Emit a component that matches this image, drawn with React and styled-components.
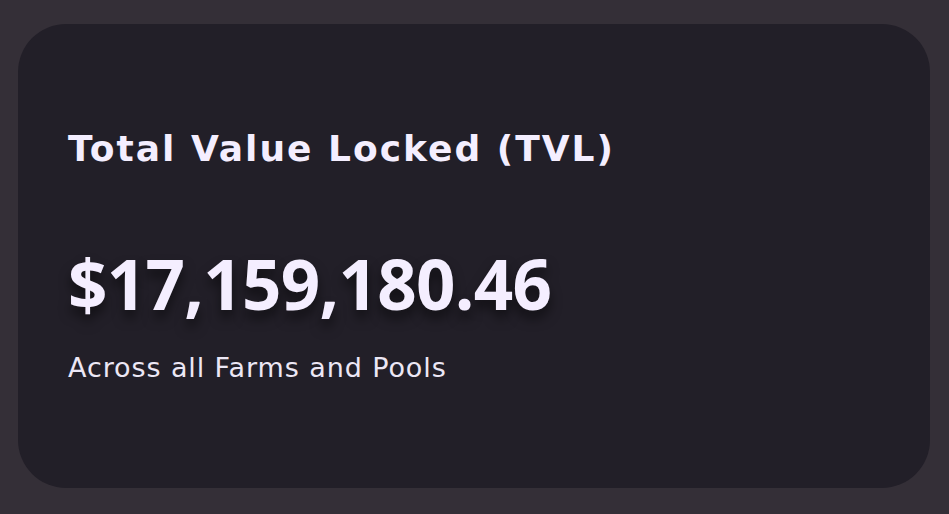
import React from "react";
import styled, { createGlobalStyle } from "styled-components";

const Global = createGlobalStyle`
  html, body { margin: 0; padding: 0; background: #342f37; }
  body { font-family: "Open Sans", "Noto Sans", sans-serif; }
`;

const Page = styled.div`
  box-sizing: border-box;
  width: 949px;
  height: 514px;
  padding: 24px 19px 26px 18px;
  display: flex;
`;

const Card = styled.section`
  flex: 1;
  background: #221f28;
  border-radius: 48px;
  padding: 0 50px;
  display: flex;
  flex-direction: column;
  justify-content: center;
  color: #f4eeff;
`;

const Title = styled.h2`
  margin: 0;
  font-family: "DejaVu Sans", sans-serif;
  font-size: 36px;
  font-weight: 700;
  line-height: 1.2;
  letter-spacing: 2px;
`;

const Value = styled.div`
  margin-top: 76px;
  font-size: 69px;
  font-weight: 700;
  line-height: 1.1;
  letter-spacing: -0.7px;
  text-shadow: 0 8px 12px rgba(0, 0, 0, 0.5);
`;

const Caption = styled.p`
  margin: 30px 0 0;
  font-family: "DejaVu Sans", sans-serif;
  font-size: 27px;
  font-weight: 400;
  line-height: 1.2;
  letter-spacing: 0.9px;
  color: #ece7f5;
`;

export default function App() {
  return (
    <>
      <Global />
      <Page>
        <Card>
          <Title>Total Value Locked (TVL)</Title>
          <Value>$17,159,180.46</Value>
          <Caption>Across all Farms and Pools</Caption>
        </Card>
      </Page>
    </>
  );
}
